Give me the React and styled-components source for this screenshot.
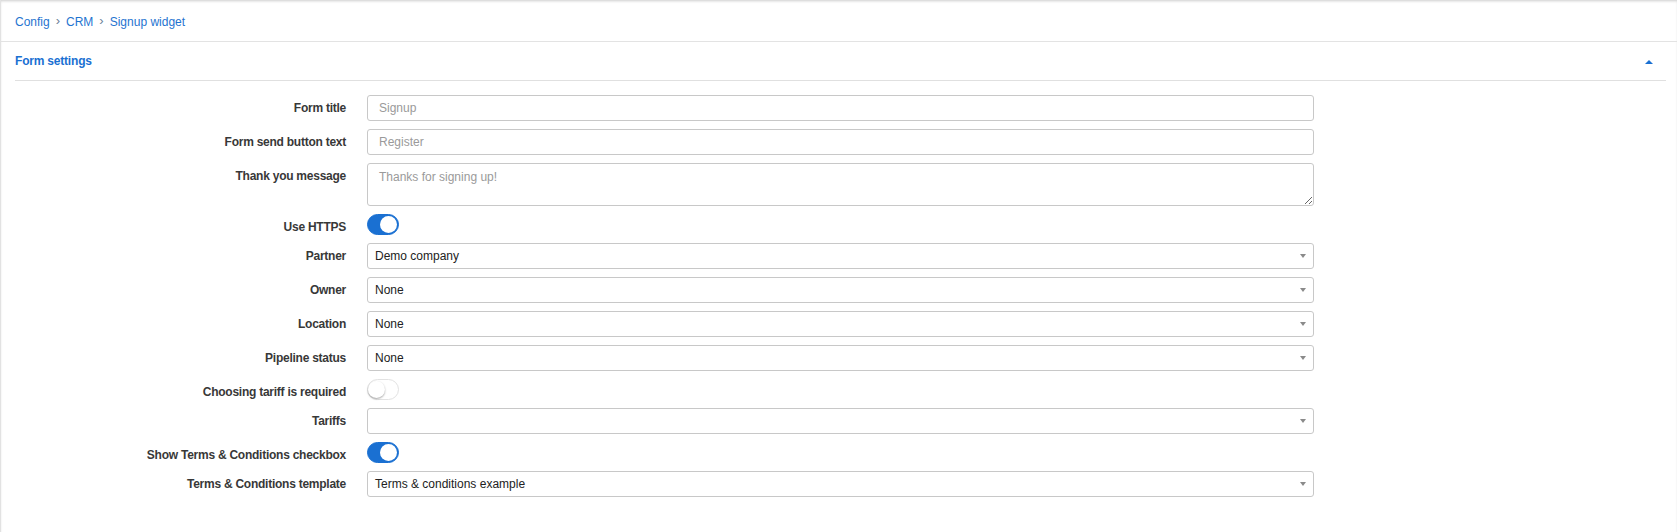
import React from "react";
import styled, { createGlobalStyle } from "styled-components";

const GlobalStyle = createGlobalStyle`
    html, body {
        margin: 0;
        padding: 0;
        background: #fff;
        font-family: "Liberation Sans", Arial, sans-serif;
    }
    * {
        box-sizing: border-box;
    }
`;

const fields = [
    { label: "Form title", type: "input", placeholder: "Signup" },
    { label: "Form send button text", type: "input", placeholder: "Register" },
    { label: "Thank you message", type: "textarea", placeholder: "Thanks for signing up!" },
    { label: "Use HTTPS", type: "switch", on: true },
    { label: "Partner", type: "select", value: "Demo company" },
    { label: "Owner", type: "select", value: "None" },
    { label: "Location", type: "select", value: "None" },
    { label: "Pipeline status", type: "select", value: "None" },
    { label: "Choosing tariff is required", type: "switch", on: false },
    { label: "Tariffs", type: "select", value: "" },
    { label: "Show Terms & Conditions checkbox", type: "switch", on: true },
    { label: "Terms & Conditions template", type: "select", value: "Terms & conditions example" },
];

const Control = ({ field }) => {
    if (field.type === "input") return <TextInput placeholder={field.placeholder} />;
    if (field.type === "textarea") return <TextArea placeholder={field.placeholder} />;
    if (field.type === "switch")
        return (
            <Switch $on={field.on}>
                <Knob $on={field.on} />
            </Switch>
        );
    return (
        <Select>
            <span>{field.value}</span>
            <Caret />
        </Select>
    );
};

const App = () => {
    return (
        <>
            <GlobalStyle />
            <Page>
                <Breadcrumbs>
                    <Crumb>Config</Crumb>
                    <Sep>›</Sep>
                    <Crumb>CRM</Crumb>
                    <Sep>›</Sep>
                    <Crumb>Signup widget</Crumb>
                </Breadcrumbs>

                <PanelHeader>
                    <PanelTitle>Form settings</PanelTitle>
                    <CollapseCaret />
                </PanelHeader>

                <Form>
                    {fields.map((f, i) => (
                        <Row key={i}>
                            <Label>{f.label}</Label>
                            <Control field={f} />
                        </Row>
                    ))}
                </Form>
            </Page>
        </>
    );
};

export default App;

const Page = styled.div`
    min-height: 532px;
    border-left: 1px solid #e2e2e2;
    box-shadow: inset 0 2px 3px -1px rgba(0, 0, 0, 0.2);
`;

const Breadcrumbs = styled.div`
    height: 42px;
    display: flex;
    align-items: center;
    gap: 6px;
    padding: 2px 14px 0;
    border-bottom: 1px solid #e3e3e3;
    font-size: 12px;
`;

const Crumb = styled.a`
    color: #1f74d0;
    cursor: pointer;
`;

const Sep = styled.span`
    color: #6b7f99;
    font-size: 13px;
    line-height: 1;
    margin-top: -2px;
`;

const PanelHeader = styled.div`
    height: 39px;
    margin: 0 11px 0 14px;
    display: flex;
    align-items: center;
    justify-content: space-between;
    border-bottom: 1px solid #e0e0e0;
    padding-right: 13px;
`;

const PanelTitle = styled.div`
    font-size: 12px;
    font-weight: bold;
    letter-spacing: -0.2px;
    color: #1a70d2;
`;

const CollapseCaret = styled.span`
    width: 0;
    height: 0;
    border-left: 4px solid transparent;
    border-right: 4px solid transparent;
    border-bottom: 4px solid #1a70d2;
    margin-top: 2px;
`;

const Form = styled.div`
    padding: 14px 0 20px 15px;
    display: flex;
    flex-direction: column;
    gap: 8px;
`;

const Row = styled.div`
    display: grid;
    grid-template-columns: 330px 947px;
    column-gap: 21px;
    align-items: start;
`;

const Label = styled.div`
    text-align: right;
    font-size: 12px;
    font-weight: bold;
    letter-spacing: -0.25px;
    color: #383838;
    padding-top: 6px;
    line-height: 14px;
    height: 20px;
    white-space: nowrap;
`;

const fieldBase = `
    width: 100%;
    border: 1px solid #c8c8c8;
    border-radius: 3px;
    background: #fff;
    font-family: "Liberation Sans", Arial, sans-serif;
    font-size: 12px;
    color: #222;
    padding: 0 11px;
    outline: none;
    &::placeholder {
        color: #9a9a9a;
    }
`;

const TextInput = styled.input`
    ${fieldBase}
    height: 26px;
`;

const TextArea = styled.textarea`
    ${fieldBase}
    height: 43px;
    padding-top: 6px;
    resize: vertical;
    display: block;
`;

const Select = styled.div`
    ${fieldBase}
    height: 26px;
    padding: 0 7px;
    display: flex;
    align-items: center;
    justify-content: space-between;
`;

const Caret = styled.span`
    width: 0;
    height: 0;
    border-left: 3.5px solid transparent;
    border-right: 3.5px solid transparent;
    border-top: 4px solid #8a8a8a;
`;

const Switch = styled.div`
    width: 32px;
    height: 21px;
    border-radius: 11px;
    position: relative;
    background: ${(p) => (p.$on ? "#1a70d2" : "#fff")};
    border: 1px solid ${(p) => (p.$on ? "#1a70d2" : "#e2e2e2")};
`;

const Knob = styled.span`
    position: absolute;
    top: 1px;
    left: ${(p) => (p.$on ? "12px" : "0px")};
    width: 17px;
    height: 17px;
    border-radius: 50%;
    background: #fff;
    box-shadow: ${(p) => (p.$on ? "none" : "0 1px 2px rgba(0,0,0,0.35)")};
`;
